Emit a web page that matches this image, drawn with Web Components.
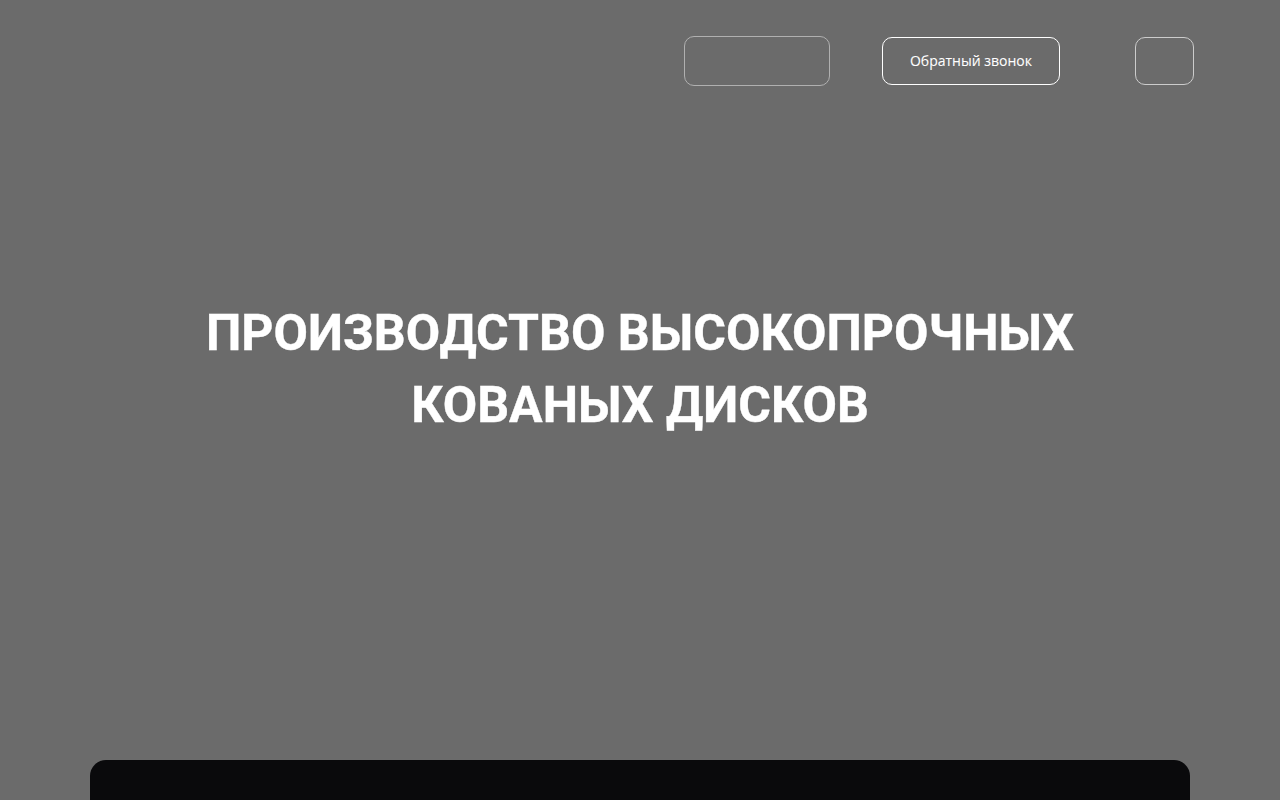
<!DOCTYPE html>
<html lang="ru"><head><meta charset="utf-8"><title>Кованые диски</title>
<style>html,body{margin:0;height:800px;overflow:hidden;background:#6b6b6b}</style></head>
<body>
<hero-page></hero-page>
<script>
function def(name, css, html){
  customElements.define(name, class extends HTMLElement{
    constructor(){super();this.attachShadow({mode:'open'}).innerHTML='<style>'+css+'</style>'+html;}
  });
}
def('ghost-box', `:host{display:block;box-sizing:border-box;width:var(--w);height:var(--h,48px);border:1px solid var(--c,#bdbdbd);border-radius:10px}`, '');
def('call-button', `:host{display:flex;align-items:center;justify-content:center;box-sizing:border-box;width:178px;height:48px;border:1px solid #fff;border-radius:10px;color:#fff;font:14px/1 "Open Sans",sans-serif;-webkit-text-stroke:.08px #fff}`, '<slot></slot>');
def('site-header', `:host{display:flex;justify-content:flex-end;align-items:center;height:50px;padding:36px 86px 0 0}
  .a{margin-right:52px}.b{margin-right:75px}`,
  `<ghost-box class="a" style="--w:146px;--h:50px;--c:#b0b0b0"></ghost-box><call-button class="b">Обратный звонок</call-button><ghost-box style="--w:59px;--c:#cccccc"></ghost-box>`);
def('hero-title', `:host{display:block;margin-top:211px;text-align:center;color:#fff;font:700 50px/72px Roboto,sans-serif;-webkit-text-stroke:.4px #fff}`, '<slot></slot>');
def('dark-card', `:host{display:block;width:1100px;height:200px;margin:319px auto 0;background:#0a0a0c;border-radius:16px}`, '');
def('hero-page', `:host{display:block;height:800px;overflow:hidden;background:#6b6b6b}`,
  `<site-header></site-header><hero-title>ПРОИЗВОДСТВО ВЫСОКОПРОЧНЫХ<br>КОВАНЫХ ДИСКОВ</hero-title><dark-card></dark-card>`);
</script>
</body></html>
